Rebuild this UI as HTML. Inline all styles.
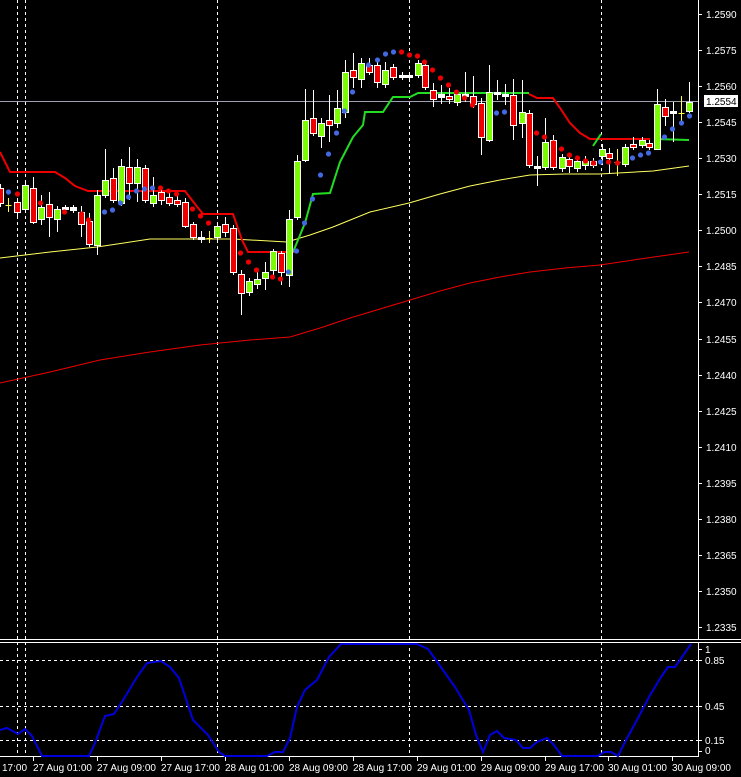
<!DOCTYPE html>
<html><head><meta charset="utf-8"><style>
html,body{margin:0;padding:0;background:#000;width:741px;height:777px;overflow:hidden}
svg{display:block}
text{font-family:"Liberation Sans",sans-serif;font-size:10px;fill:#fff}
</style></head><body>
<svg id="s" width="741" height="777" xmlns="http://www.w3.org/2000/svg">
<rect width="741" height="777" fill="#000"/>
<g stroke="#fff" stroke-width="1" stroke-dasharray="3,3">
<line x1="17.5" y1="0" x2="17.5" y2="757"/>
<line x1="25.5" y1="0" x2="25.5" y2="757"/>
<line x1="217.5" y1="0" x2="217.5" y2="757"/>
<line x1="409.5" y1="0" x2="409.5" y2="757"/>
<line x1="601.5" y1="0" x2="601.5" y2="757"/>
<line x1="0" y1="660.5" x2="698" y2="660.5"/>
<line x1="0" y1="706.5" x2="698" y2="706.5"/>
<line x1="0" y1="740.5" x2="698" y2="740.5"/>
</g>
<line x1="0" y1="101.5" x2="699" y2="101.5" stroke="#a0a0b0"/>
<polyline fill="none" stroke="#e00" stroke-width="1" points="0,383 50,372 100,360 150,352 200,345 250,340 290,337 320,328 350,318 380,309 410,300 440,291 470,283 500,277 530,272 565,268 600,265 640,259 689,252"/>
<polyline fill="none" stroke="#ffff60" stroke-width="1" points="0,258 50,252 97,247 150,239 233,239 287,242 310,235 333,227 370,212 409,203 440,194 470,186 500,180 530,175 565,174 600,174 653,171 689,166"/>
<polyline fill="none" stroke="#e00" stroke-width="2" points="0,152 10,172 55,172 65,178 75,186 88,191 185,191 195,204 203,214 233,214 242,240 248,252 285,252 295,252"/>
<polyline fill="none" stroke="#22dd22" stroke-width="2" points="293,252 305,223 313,194 330,193 340,162 353,137 363,125 365,112 383,112 393,97 410,97 418,93 529,93"/>
<polyline fill="none" stroke="#e00" stroke-width="2" points="529,94 537,98 553,98 560,108 570,123 580,133 590,139 650,139"/>
<polyline fill="none" stroke="#22dd22" stroke-width="2" points="593,146 601,134"/>
<polyline fill="none" stroke="#22dd22" stroke-width="2" points="655,139 689,140"/>
<g id="candles"></g>
<g id="dots"></g>
<line x1="698.5" y1="0" x2="698.5" y2="639" stroke="#fff"/>
<line x1="0" y1="639.5" x2="741" y2="639.5" stroke="#fff"/>
<line x1="0" y1="642.5" x2="741" y2="642.5" stroke="#fff"/>
<line x1="698.5" y1="642" x2="698.5" y2="757" stroke="#fff"/>
<line x1="0" y1="756.5" x2="699" y2="756.5" stroke="#fff"/>
<polyline fill="none" stroke="#0000dd" stroke-width="2" points="0,730 7,728 18,734 25,729 32,736 42,756 89,756 95,743 105,716 114,714 125,697 137,677 147,663 161,661 170,667 179,678 193,720 208,735 219,752 225,756 267,756 275,752 283,752 290,738 297,707 305,690 317,680 329,657 341,644 417,644 428,649 443,670 455,687 469,710 476,735 483,752 490,735 497,731 504,738 516,740 523,748 530,748 537,742 547,738 554,745 562,756 598,756 604,752 611,752 618,756 625,742 637,720 649,697 661,677 668,667 675,667 682,657 691,644"/>
<g id="ticks" stroke="#fff"></g>
<g>
<text x="706" y="18">1.2590</text>
<text x="706" y="54">1.2575</text>
<text x="706" y="90">1.2560</text>
<text x="706" y="126">1.2545</text>
<text x="706" y="162">1.2530</text>
<text x="706" y="198">1.2515</text>
<text x="706" y="234">1.2500</text>
<text x="706" y="270">1.2485</text>
<text x="706" y="306">1.2470</text>
<text x="706" y="343">1.2455</text>
<text x="706" y="379">1.2440</text>
<text x="706" y="415">1.2425</text>
<text x="706" y="451">1.2410</text>
<text x="706" y="487">1.2395</text>
<text x="706" y="523">1.2380</text>
<text x="706" y="559">1.2365</text>
<text x="706" y="595">1.2350</text>
<text x="706" y="631">1.2335</text>
</g>
<rect x="704" y="95" width="34" height="12" fill="#fff"/>
<text x="706" y="105" style="fill:#000">1.2554</text>
<text x="705" y="653">1</text>
<text x="705" y="664">0.85</text>
<text x="705" y="710">0.45</text>
<text x="705" y="744">0.15</text>
<text x="705" y="754">0</text>
<g>
<text x="2" y="771">17:00</text>
<text x="33" y="771">27 Aug 01:00</text>
<text x="97" y="771">27 Aug 09:00</text>
<text x="161" y="771">27 Aug 17:00</text>
<text x="225" y="771">28 Aug 01:00</text>
<text x="289" y="771">28 Aug 09:00</text>
<text x="353" y="771">28 Aug 17:00</text>
<text x="417" y="771">29 Aug 01:00</text>
<text x="481" y="771">29 Aug 09:00</text>
<text x="545" y="771">29 Aug 17:00</text>
<text x="608" y="771">30 Aug 01:00</text>
<text x="672" y="771">30 Aug 09:00</text>
</g>
</svg>
<script>
var NS="http://www.w3.org/2000/svg";
function el(p,t,a){var e=document.createElementNS(NS,t);for(var k in a)e.setAttribute(k,a[k]);p.appendChild(e);return e;}
var C=[[0,188,203,184,207,'r'],[8,205,205,198,212,'y'],[17,202,212,198,217,'r'],[25,185,209,182,212,'g'],[33,188,222,177,224,'r'],[41,207,219,195,225,'g'],[49,204,217,192,237,'r'],[57,209,219,206,232,'g'],[65,207,209,205,213,'w'],[73,207,210,205,213,'w'],[81,212,224,206,237,'r'],[89,221,244,213,247,'r'],[97,195,245,190,255,'g'],[105,180,195,149,198,'g'],[113,178,200,168,203,'r'],[121,166,203,159,206,'g'],[129,167,183,147,200,'r'],[137,167,183,159,202,'g'],[145,168,200,165,203,'r'],[153,195,203,177,207,'g'],[161,192,200,190,205,'r'],[169,197,203,190,206,'r'],[177,200,204,195,207,'r'],[185,202,226,198,228,'r'],[193,224,237,222,240,'r'],[201,237,238,231,243,'w'],[209,238,238,231,243,'y'],[217,226,237,222,240,'g'],[225,224,232,217,237,'r'],[233,228,272,225,275,'r'],[241,274,293,270,315,'r'],[249,281,292,278,296,'g'],[257,279,284,272,289,'g'],[265,272,278,262,290,'g'],[273,251,270,249,275,'g'],[281,253,272,251,285,'r'],[289,219,275,210,287,'g'],[297,161,217,155,220,'g'],[305,120,160,89,162,'g'],[313,118,133,90,136,'r'],[321,123,136,118,148,'g'],[329,120,125,95,142,'r'],[337,108,123,90,128,'g'],[345,72,112,60,118,'g'],[353,70,77,53,88,'r'],[361,63,79,58,88,'g'],[369,65,72,58,75,'r'],[377,65,82,60,88,'r'],[385,70,84,62,88,'g'],[393,67,77,64,80,'r'],[402,75,76,72,80,'w'],[409,75,76,72,82,'w'],[418,63,75,60,78,'g'],[425,65,87,60,90,'r'],[433,90,99,83,107,'r'],[441,94,97,85,104,'w'],[449,96,99,88,104,'r'],[457,94,102,92,106,'g'],[465,94,96,72,102,'w'],[473,96,104,76,108,'r'],[481,103,137,98,155,'r'],[489,92,140,65,142,'g'],[497,92,94,80,100,'w'],[505,94,96,84,105,'w'],[513,95,125,79,140,'r'],[522,112,123,80,138,'g'],[529,113,165,110,168,'r'],[537,166,168,156,186,'w'],[545,142,167,118,170,'g'],[553,140,167,135,170,'r'],[562,157,168,154,172,'g'],[569,159,166,156,173,'r'],[577,161,168,158,172,'g'],[585,161,165,156,170,'g'],[593,161,165,158,168,'r'],[602,149,156,144,165,'g'],[609,153,158,148,174,'r'],[617,162,162,149,176,'y'],[625,147,164,144,167,'g'],[633,144,147,137,150,'r'],[642,140,145,137,148,'g'],[649,143,147,140,150,'r'],[657,104,149,89,150,'g'],[665,107,116,99,126,'r'],[673,111,113,102,142,'w'],[681,113,113,96,125,'y'],[689,102,111,82,113,'g']];
var g=document.getElementById('candles');
C.forEach(function(c){var x=c[0]+0.5;
 if(c[5]=='y'){el(g,'line',{x1:x,y1:c[3],x2:x,y2:c[4],stroke:'#ffff40'});el(g,'line',{x1:x-3,y1:c[1]+0.5,x2:x+3,y2:c[1]+0.5,stroke:'#ffff40'});return;}
 el(g,'line',{x1:x,y1:c[3],x2:x,y2:c[4],stroke:'#fff'});
 var f=c[5]=='g'?'#7cfc00':(c[5]=='r'?'#e00':'#fff');
 var h=Math.max(c[2]-c[1],2);
 el(g,'rect',{x:x-3,y:c[1]+0.5,width:6,height:h,fill:f,stroke:'#fff','stroke-width':1});
});
var B=[[8,192],[104,212],[112,210],[120,203],[128,197],[136,191],[144,189],[152,188],[288,272],[296,251],[304,223],[312,199],[320,175],[328,154],[336,133],[344,111],[352,92],[368,65],[377,60],[385,54],[393,52],[496,113],[504,112],[600,162],[632,158],[640,155],[648,153],[664,137],[672,129],[681,123],[689,116]];
var R=[[17,194],[40,203],[64,212],[81,214],[88,220],[160,188],[168,191],[176,194],[192,209],[200,216],[208,223],[240,253],[248,262],[256,270],[272,277],[280,279],[401,52],[409,55],[417,56],[424,62],[432,70],[440,78],[448,85],[456,92],[464,98],[472,105],[536,133],[544,137],[553,143],[561,149],[569,155],[577,158],[585,161],[593,163],[608,162],[617,163]];
var d=document.getElementById('dots');
B.forEach(function(p){el(d,'circle',{cx:p[0]+0.5,cy:p[1],r:2.6,fill:'#4169e1'});});
R.forEach(function(p){el(d,'circle',{cx:p[0]+0.5,cy:p[1],r:2.6,fill:'#e00'});});
var t=document.getElementById('ticks');
for(var k=0;k<18;k++){var y=Math.round(14+k*36.06)+0.5;el(t,'line',{x1:698,y1:y,x2:702,y2:y});}
[649,660,706,740,751].forEach(function(y){el(t,'line',{x1:698,y1:y+0.5,x2:702,y2:y+0.5});});
[33,97,161,225,289,353,417,481,545,608,672].forEach(function(x){el(t,'line',{x1:x+0.5,y1:757,x2:x+0.5,y2:761});});
</script>
</body></html>
